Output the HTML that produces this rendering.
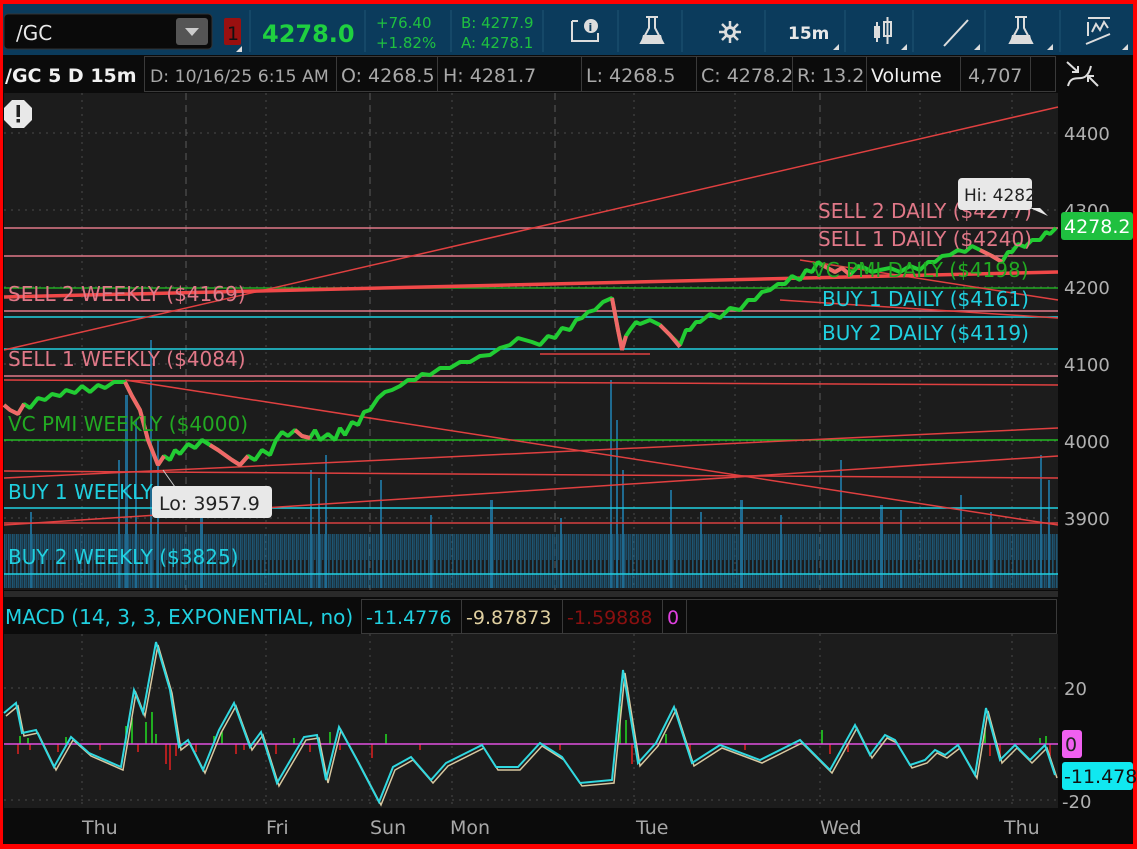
<!DOCTYPE html>
<html><head><meta charset="utf-8"><style>
*{margin:0;padding:0;box-sizing:border-box}
body{width:1137px;height:849px;background:#f00;overflow:hidden;font-family:"Liberation Sans","DejaVu Sans",sans-serif;position:relative}
.abs{position:absolute}
</style></head><body>
<svg class="abs" style="left:0;top:0" width="1137" height="849" xmlns="http://www.w3.org/2000/svg" font-family="DejaVu Sans, Liberation Sans, sans-serif">
<defs>
<pattern id="vol" width="4" height="70" patternUnits="userSpaceOnUse">
<rect x="0" y="0" width="1.6" height="70" fill="#1f6a90"/>
<rect x="2" y="14" width="1.4" height="56" fill="#1a5a7c"/>
</pattern>
</defs>
<rect x="3" y="4" width="1130" height="840" fill="#0b0b0b"/>
<rect x="3" y="4" width="1130" height="51" fill="#0b3b5c"/>
<rect x="4" y="14" width="208" height="35" rx="4" fill="#0a0a0a" stroke="#333" />
<text x="16" y="40" fill="#e8e8e8" font-size="20">/GC</text>
<rect x="176" y="18" width="32" height="27" rx="3" fill="#555"/>
<path d="M185 28 L199 28 L192 36Z" fill="#ccc"/>
<rect x="224" y="18" width="17" height="27" rx="2" fill="#9a1010"/>
<text x="227" y="40" fill="#111" font-size="19">1</text>
<path d="M242 46 L242 52 L236 52Z" fill="#ddd"/>
<g stroke="#1f5475" stroke-width="1">
<line x1="250" y1="10" x2="250" y2="52"/><line x1="365" y1="10" x2="365" y2="52"/><line x1="451" y1="10" x2="451" y2="52"/><line x1="543" y1="10" x2="543" y2="52"/><line x1="618" y1="10" x2="618" y2="52"/><line x1="682" y1="10" x2="682" y2="52"/><line x1="765" y1="10" x2="765" y2="52"/><line x1="845" y1="10" x2="845" y2="52"/><line x1="913" y1="10" x2="913" y2="52"/><line x1="985" y1="10" x2="985" y2="52"/><line x1="1060" y1="10" x2="1060" y2="52"/>
</g>
<text x="262" y="42" fill="#1fd040" font-size="24" font-weight="bold">4278.0</text>
<text x="376" y="28" fill="#1fc040" font-size="15">+76.40</text>
<text x="376" y="48" fill="#1fc040" font-size="15">+1.82%</text>
<text x="461" y="28" fill="#1fc040" font-size="15">B: 4277.9</text>
<text x="461" y="48" fill="#1fc040" font-size="15">A: 4278.1</text>
<g fill="none" stroke="#ddd" stroke-width="2">
<path d="M572 21 L578 21 M572 21 L572 41 L598 41 L598 33"/>
<path d="M646 17 L658 17 M649 17 L649 28 L641 43 L663 43 L655 28 L655 17"/>
<path d="M944 46 L968 20"/>
<path d="M1015 17 L1027 17 M1018 17 L1018 28 L1010 43 L1032 43 L1024 28 L1024 17"/>
<path d="M1088 18 L1110 18 M1088 22 L1088 36 M1092 32 L1096 24 L1100 30 L1104 22 L1108 28 M1086 44 L1110 34"/>
</g>
<circle cx="591" cy="26" r="7" fill="#ddd"/><text x="588.5" y="31" font-size="11" font-weight="bold" fill="#0b3b5c">i</text>
<path d="M643 35 L661 35 L663 43 L641 43Z" fill="#ddd"/>
<path d="M1012 35 L1030 35 L1032 43 L1010 43Z" fill="#ddd"/>
<g transform="translate(730,32)" fill="#ddd"><circle r="6"/><g stroke="#ddd" stroke-width="2.5"><line x1="0" y1="-11" x2="0" y2="11"/><line x1="-11" y1="0" x2="11" y2="0"/><line x1="-8" y1="-8" x2="8" y2="8"/><line x1="-8" y1="8" x2="8" y2="-8"/></g><circle r="3" fill="#0b3b5c"/></g>
<text x="788" y="39" fill="#e8e8e8" font-size="17" font-weight="bold">15m</text>
<g fill="#ddd"><rect x="874" y="26" width="6" height="12"/><line x1="877" y1="22" x2="877" y2="42" stroke="#ddd" stroke-width="2"/></g>
<rect x="884" y="22" width="7" height="14" fill="none" stroke="#ddd" stroke-width="2"/><line x1="887.5" y1="17" x2="887.5" y2="44" stroke="#ddd" stroke-width="2"/>
<g fill="#ddd"><path d="M839 50 L839 44 L833 50Z"/><path d="M907 50 L907 44 L901 50Z"/><path d="M980 50 L980 44 L974 50Z"/><path d="M1053 50 L1053 44 L1047 50Z"/><path d="M1128 50 L1128 44 L1122 50Z"/></g>
<rect x="3" y="55" width="1055" height="38" fill="#0b0b0b"/>
<g stroke="#3a3a3a" fill="none"><rect x="144.5" y="56.5" width="192" height="35"/><rect x="336.5" y="56.5" width="101" height="35"/><rect x="437.5" y="56.5" width="144" height="35"/><rect x="581.5" y="56.5" width="115" height="35"/><rect x="696.5" y="56.5" width="96" height="35"/><rect x="792.5" y="56.5" width="74" height="35"/><rect x="866.5" y="56.5" width="94" height="35"/><rect x="960.5" y="56.5" width="70" height="35"/><rect x="1030.5" y="56.5" width="25" height="35"/></g>
<text x="5" y="82" fill="#f0f0f0" font-size="19" font-weight="bold">/GC 5 D 15m</text>
<g fill="#a8a8a8" font-size="19"><text x="150" y="82" font-size="17.3">D: 10/16/25 6:15 AM</text><text x="341" y="82">O: 4268.5</text><text x="443" y="82">H: 4281.7</text><text x="586" y="82">L: 4268.5</text><text x="701" y="82">C: 4278.2</text><text x="797" y="82">R: 13.2</text><text x="968" y="82">4,707</text></g>
<text x="871" y="82" fill="#f0f0f0" font-size="19">Volume</text>
<g stroke="#ddd" stroke-width="2" fill="none"><path d="M1067 62 L1078 72 M1078 66 L1078 72 L1072 72"/><path d="M1068 86 C1072 70 1086 88 1091 66"/><path d="M1098 86 L1088 76 M1088 82 L1088 76 L1094 76"/></g>
<rect x="4" y="93" width="1054" height="497" fill="#1c1c1c"/>
<rect x="1058" y="93" width="75" height="497" fill="#0b0b0b"/>
<g stroke="#4a4a4a" stroke-dasharray="2 5"><line x1="4" y1="133" x2="1058" y2="133"/><line x1="4" y1="210" x2="1058" y2="210"/><line x1="4" y1="287" x2="1058" y2="287"/><line x1="4" y1="364" x2="1058" y2="364"/><line x1="4" y1="441" x2="1058" y2="441"/><line x1="4" y1="518" x2="1058" y2="518"/></g>
<g stroke="#4a4a4a" stroke-dasharray="2 5"><line x1="82" y1="93" x2="82" y2="590"/><line x1="266" y1="93" x2="266" y2="590"/><line x1="452" y1="93" x2="452" y2="590"/><line x1="634" y1="93" x2="634" y2="590"/><line x1="735" y1="93" x2="735" y2="590"/><line x1="920" y1="93" x2="920" y2="590"/><line x1="1012" y1="93" x2="1012" y2="590"/></g>
<g stroke="#5a5a5a" stroke-dasharray="7 5"><line x1="186" y1="93" x2="186" y2="590"/><line x1="370" y1="93" x2="370" y2="590"/><line x1="555" y1="93" x2="555" y2="590"/><line x1="820" y1="93" x2="820" y2="590"/></g>
<rect x="4" y="534" width="1054" height="54" fill="url(#vol)" opacity="0.75"/>
<g fill="#1f6a90"><rect x="125" y="395" width="3" height="193"/><rect x="118" y="460" width="2" height="128"/><rect x="135" y="420" width="2" height="168"/><rect x="150" y="340" width="2" height="248"/><rect x="157" y="440" width="2" height="148"/><rect x="310" y="470" width="2" height="118"/><rect x="318" y="478" width="2" height="110"/><rect x="325" y="455" width="2" height="133"/><rect x="380" y="480" width="2" height="108"/><rect x="490" y="500" width="3" height="88"/><rect x="610" y="380" width="2" height="208"/><rect x="616" y="420" width="2" height="168"/><rect x="622" y="470" width="2" height="118"/><rect x="670" y="490" width="2" height="98"/><rect x="840" y="460" width="2" height="128"/><rect x="960" y="495" width="2" height="93"/><rect x="1040" y="455" width="2" height="133"/><rect x="1048" y="480" width="2" height="108"/><rect x="200" y="505" width="3" height="83"/><rect x="740" y="500" width="3" height="88"/><rect x="880" y="505" width="3" height="83"/><rect x="30" y="512" width="2" height="76"/><rect x="430" y="515" width="2" height="73"/><rect x="560" y="518" width="2" height="70"/><rect x="700" y="512" width="2" height="76"/><rect x="780" y="515" width="2" height="73"/><rect x="900" y="510" width="2" height="78"/><rect x="990" y="512" width="2" height="76"/></g>
<g stroke-width="1.5">
<line x1="4" y1="228" x2="1058" y2="228" stroke="#e07888"/>
<line x1="4" y1="256" x2="1058" y2="256" stroke="#e07888"/>
<line x1="4" y1="288" x2="1058" y2="288" stroke="#22aa22"/>
<line x1="4" y1="311" x2="1058" y2="311" stroke="#e07888"/>
<line x1="4" y1="317" x2="1058" y2="317" stroke="#20d0e0"/>
<line x1="4" y1="349" x2="1058" y2="349" stroke="#20d0e0"/>
<line x1="4" y1="376" x2="1058" y2="376" stroke="#e07888"/>
<line x1="4" y1="440" x2="1058" y2="440" stroke="#22bb22"/>
<line x1="4" y1="508" x2="1058" y2="508" stroke="#20d0e0"/>
<line x1="4" y1="523" x2="1058" y2="523" stroke="#d84040"/>
<line x1="4" y1="574" x2="1058" y2="574" stroke="#20d0e0"/>
</g>
<g stroke="#e04040" stroke-width="1.5" fill="none">
<line x1="4" y1="350" x2="1058" y2="107"/>
<line x1="4" y1="380" x2="1058" y2="385"/>
<line x1="125" y1="380" x2="1058" y2="525"/>
<line x1="4" y1="478" x2="1058" y2="428"/>
<line x1="4" y1="525" x2="1058" y2="456"/>
<line x1="4" y1="471" x2="1058" y2="478"/>
<line x1="540" y1="354" x2="650" y2="354"/>
<line x1="780" y1="300" x2="1058" y2="318"/>
<line x1="800" y1="260" x2="1058" y2="300"/>
<line x1="4" y1="297" x2="1058" y2="272" stroke-width="3.5" stroke="#f04848"/>
</g>
<polyline fill="none" stroke="#22cc33" stroke-width="4" stroke-linejoin="bevel" points="4,405 10,410 18,414 24,404 30,408 38,398 45,400 52,394 60,396 66,390 75,393 82,386 90,392 98,385 105,388 114,382 125,382 132,396 140,410 148,440 158,465 164,456 170,460 175,450 180,454 188,444 195,448 202,440 210,445 218,450 225,455 232,460 240,465 248,456 255,460 262,450 270,455 276,440 282,432 288,436 295,430 302,436 310,438 315,430 320,440 328,434 335,440 340,428 345,435 352,422 358,425 364,412 370,410 378,398 385,392 392,390 400,386 408,380 415,380 422,374 430,375 440,368 450,368 460,362 470,362 480,356 490,355 500,348 510,345 518,338 525,340 532,342 540,345 548,336 555,338 562,328 570,330 576,320 582,318 588,312 595,310 603,302 612,298 618,330 622,348 626,336 630,330 636,322 640,324 650,320 660,325 670,335 680,345 686,330 690,330 696,322 700,322 710,314 720,318 730,308 740,310 748,300 755,300 762,292 770,290 778,284 785,284 792,276 800,280 806,270 812,272 818,262 822,265 835,272 842,268 850,275 858,266 865,268 872,272 880,270 890,268 900,272 910,266 920,270 928,262 935,262 942,256 950,255 958,250 965,252 972,246 980,250 992,256 1002,262 1008,252 1012,252 1018,244 1025,247 1032,240 1040,240 1046,232 1050,234 1056,228"/>
<g fill="none" stroke="#f06868" stroke-width="4" stroke-linejoin="bevel">
<polyline points="4,405 10,410 18,414 24,404"/>
<polyline points="125,382 132,396 140,410 148,440 158,465 164,456"/>
<polyline points="210,445 218,450 225,455 232,460 240,465 248,456"/>
<polyline points="295,430 302,436 310,438"/>
<polyline points="612,298 618,330 622,350 626,336"/>
<polyline points="660,325 670,335 680,347"/>
<polyline points="822,265 835,272 842,268 850,275"/>
<polyline points="980,250 992,256 1002,262"/>
</g>
<g font-size="20">
<text x="818" y="218" fill="#e07888">SELL 2 DAILY ($4277)</text>
<text x="818" y="246" fill="#e07888">SELL 1 DAILY ($4240)</text>
<text x="812" y="277" fill="#22aa22">VC PMI DAILY ($4198)</text>
<text x="822" y="306" fill="#20d0e0">BUY 1 DAILY ($4161)</text>
<text x="822" y="340" fill="#20d0e0">BUY 2 DAILY ($4119)</text>
<text x="8" y="301" fill="#e07888">SELL 2 WEEKLY ($4169)</text>
<text x="8" y="366" fill="#e07888">SELL 1 WEEKLY ($4084)</text>
<text x="8" y="431" fill="#22aa22">VC PMI WEEKLY ($4000)</text>
<text x="8" y="499" fill="#20d0e0">BUY 1 WEEKLY</text>
<text x="8" y="564" fill="#20d0e0">BUY 2 WEEKLY ($3825)</text>
</g>
<rect x="958" y="178" width="74" height="32" rx="4" fill="#e8e8e8"/>
<path d="M1040 208 L1048 216 L1030 208Z" fill="#e8e8e8"/>
<text x="964" y="201" font-size="17" fill="#222">Hi: 4282</text>
<line x1="163" y1="470" x2="175" y2="487" stroke="#ccc"/>
<rect x="152" y="486" width="120" height="32" rx="4" fill="#e8e8e8"/>
<text x="159" y="510" font-size="19" fill="#222">Lo: 3957.9</text>
<path d="M12 100 L24 100 L32 108 L32 120 L24 128 L12 128 L4 120 L4 108Z" fill="#e8e8e8"/>
<rect x="16.5" y="105" width="3.5" height="12" fill="#222"/><rect x="16.5" y="119" width="3.5" height="3.5" fill="#222"/>
<g fill="#b0b0b0" font-size="18"><text x="1064" y="140">4400</text><text x="1064" y="217">4300</text><text x="1064" y="294">4200</text><text x="1064" y="371">4100</text><text x="1064" y="448">4000</text><text x="1064" y="525">3900</text></g>
<rect x="1061" y="212" width="72" height="28" rx="3" fill="#1fc040"/>
<text x="1064" y="233" font-size="19" fill="#fff">4278.2</text>
<rect x="4" y="591" width="1054" height="6" fill="#2a2a2a"/>
<rect x="3" y="598" width="1055" height="36" fill="#0b0b0b"/>
<g stroke="#3a3a3a" fill="none"><rect x="361.5" y="599.5" width="100" height="34"/><rect x="461.5" y="599.5" width="101" height="34"/><rect x="562.5" y="599.5" width="100" height="34"/><rect x="662.5" y="599.5" width="24" height="34"/><rect x="686.5" y="599.5" width="370" height="34"/></g>
<g font-size="19"><text x="5" y="624" fill="#20d0e0" font-size="20">MACD (14, 3, 3, EXPONENTIAL, no)</text><text x="366" y="624" fill="#20d0e0">-11.4776</text><text x="466" y="624" fill="#e0d0a0">-9.87873</text><text x="567" y="624" fill="#8a1010">-1.59888</text><text x="667" y="624" fill="#e040e0">0</text></g>
<rect x="4" y="634" width="1054" height="174" fill="#1c1c1c"/>
<rect x="1058" y="634" width="75" height="174" fill="#0b0b0b"/>
<g stroke="#4a4a4a" stroke-dasharray="2 5"><line x1="4" y1="688" x2="1058" y2="688"/><line x1="4" y1="800" x2="1058" y2="800"/><line x1="82" y1="634" x2="82" y2="808"/><line x1="266" y1="634" x2="266" y2="808"/><line x1="370" y1="634" x2="370" y2="808"/><line x1="452" y1="634" x2="452" y2="808"/><line x1="634" y1="634" x2="634" y2="808"/><line x1="820" y1="634" x2="820" y2="808"/><line x1="1012" y1="634" x2="1012" y2="808"/></g>
<g stroke-width="1.5">
<path d="M20 744v-8M28 744v-6M66 744v-7M126 744v-18M132 744v-26M146 744v-22M152 744v-32M156 744v-10M214 744v-8M222 744v-12M294 744v-6M330 744v-12M386 744v-10M620 744v-38M626 744v-24M666 744v-10M822 744v-14M985 744v-16M1040 744v-6M1046 744v-8" stroke="#22dd22"/>
<path d="M18 744v10M30 744v6M58 744v8M100 744v6M138 744v8M166 744v20M170 744v26M176 744v12M196 744v8M236 744v10M244 744v6M276 744v10M310 744v8M340 744v6M372 744v14M420 744v6M560 744v6M632 744v20M690 744v10M745 744v6M830 744v10M848 744v8M990 744v12M1000 744v16M1050 744v12" stroke="#e02020"/>
</g>
<line x1="4" y1="744" x2="1058" y2="744" stroke="#e050e0" stroke-width="1.5"/>
<polyline fill="none" stroke="#d8c8a0" stroke-width="1.5" transform="translate(2,3)" points="4,713 16,703 22,733 36,730 54,767 71,737 89,753 121,767 134,690 143,713 156,642 170,690 179,747 188,740 203,770 219,730 234,703 250,747 261,732 277,783 304,737 317,735 326,780 339,727 357,760 379,802 393,767 411,757 431,780 446,763 482,745 496,767 518,767 540,743 562,757 580,783 612,780 623,670 638,763 656,743 674,707 692,763 720,745 760,760 800,740 830,770 855,725 870,755 885,735 895,740 910,765 925,760 935,750 945,755 958,745 975,775 986,708 1000,760 1015,745 1030,760 1045,745 1055,775"/>
<polyline fill="none" stroke="#30d8e0" stroke-width="2" points="4,713 16,703 22,733 36,730 54,767 71,737 89,753 121,767 134,690 143,713 156,642 170,690 179,747 188,740 203,770 219,730 234,703 250,747 261,732 277,783 304,737 317,735 326,780 339,727 357,760 379,802 393,767 411,757 431,780 446,763 482,745 496,767 518,767 540,743 562,757 580,783 612,780 623,670 638,763 656,743 674,707 692,763 720,745 760,760 800,740 830,770 855,725 870,755 885,735 895,740 910,765 925,760 935,750 945,755 958,745 975,775 986,708 1000,760 1015,745 1030,760 1045,745 1055,775"/>
<g fill="#b0b0b0" font-size="18"><text x="1064" y="695">20</text><text x="1062" y="808">-20</text></g>
<rect x="1062" y="730" width="20" height="28" rx="3" fill="#f060f0"/><text x="1065" y="751" font-size="19" fill="#222">0</text>
<rect x="1062" y="762" width="71" height="28" rx="3" fill="#10e8f0"/><text x="1064" y="783" font-size="19" fill="#111">-11.478</text>
<rect x="3" y="808" width="1130" height="36" fill="#0b0b0b"/>
<g fill="#a8a8a8" font-size="19"><text x="82" y="834">Thu</text><text x="266" y="834">Fri</text><text x="370" y="834">Sun</text><text x="450" y="834">Mon</text><text x="636" y="834">Tue</text><text x="820" y="834">Wed</text><text x="1004" y="834">Thu</text></g>
</svg>
</body></html>
